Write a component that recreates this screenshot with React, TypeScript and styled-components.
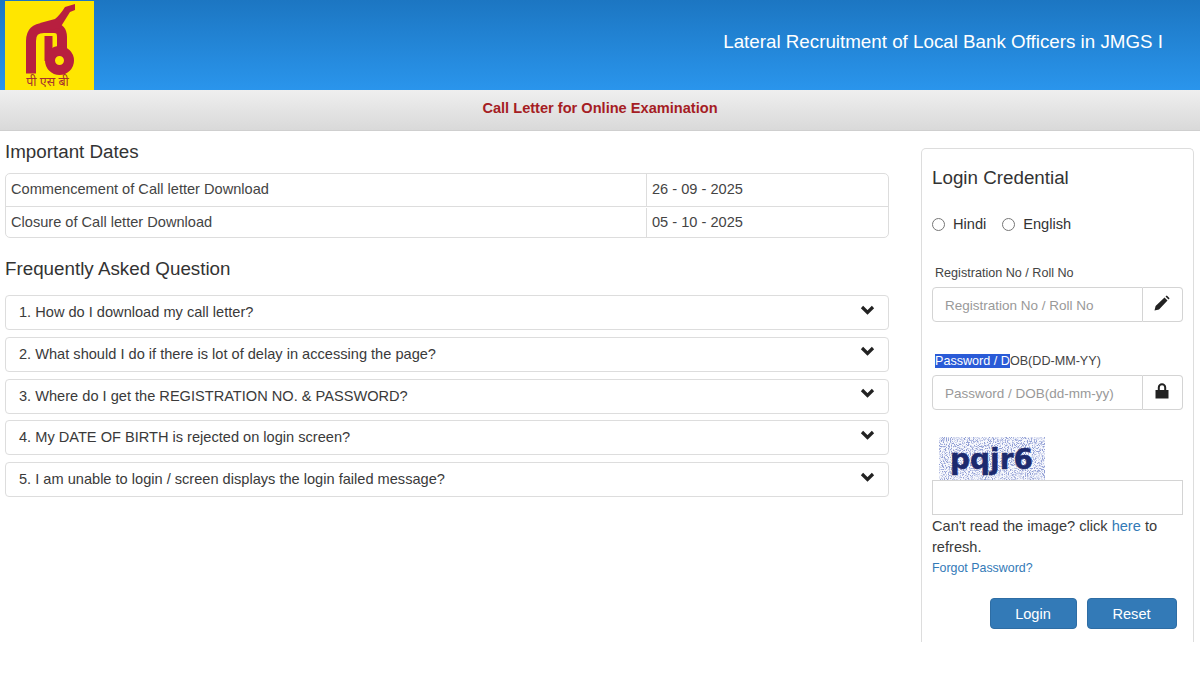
import React from 'react';
import styled, { createGlobalStyle } from 'styled-components';

const GlobalStyle = createGlobalStyle`
  html, body {
    margin: 0;
    padding: 0;
    background: #fff;
  }
  body {
    font-family: "Liberation Sans", Arial, sans-serif;
    color: #333;
    overflow: hidden;
  }
  * {
    box-sizing: border-box;
  }
`;

const Page = styled.div`
  width: 1200px;
  height: 700px;
  display: flex;
  flex-direction: column;
`;

const Header = styled.header`
  height: 90px;
  flex: none;
  display: flex;
  justify-content: space-between;
  align-items: center;
  padding: 1px 37px 0 5px;
  background: linear-gradient(to bottom, #1c76c2 0%, #2a95ec 100%);
`;

const LogoBox = styled.div`
  width: 89px;
  height: 89px;
  background: #ffe600;
  display: flex;
  flex-direction: column;
  align-items: center;
`;

const LogoText = styled.span`
  font-family: "Noto Sans", "Liberation Sans", sans-serif;
  font-size: 12.5px;
  line-height: 12px;
  padding-right: 4px;
  white-space: nowrap;
  color: #a5302f;
`;

const HeaderTitle = styled.div`
  color: #fff;
  font-size: 18.78px;
  margin-top: -8px;
`;

const SubHeader = styled.div`
  height: 41px;
  flex: none;
  display: flex;
  align-items: center;
  justify-content: center;
  padding-bottom: 4px;
  background: linear-gradient(to bottom, #efefef 0%, #d9d9d9 100%);
  border-bottom: 1px solid #cfcfcf;
  color: #a51d24;
  font-size: 14.6px;
  font-weight: bold;
`;

const Body = styled.main`
  flex: 1;
  display: flex;
  justify-content: space-between;
  align-items: flex-start;
  padding: 0 6px 0 5px;
`;

const LeftColumn = styled.section`
  width: 884px;
  padding-top: 10px;
`;

const Heading = styled.h2`
  margin: 0 0 10px;
  font-size: 18.8px;
  font-weight: normal;
  line-height: 22px;
`;

const DatesTable = styled.div`
  border: 1px solid #ddd;
  border-radius: 5px;
  margin-bottom: 20px;
`;

const DateRow = styled.div`
  display: grid;
  grid-template-columns: 640px 1fr;
  height: 31.5px;
  & + & {
    border-top: 1px solid #ddd;
    padding-top: 1px;
  }
`;

const DateCell = styled.div`
  display: flex;
  align-items: center;
  padding: 0 5px 1px;
  font-size: 14.6px;
  color: #444;
  & + & {
    border-left: 1px solid #ddd;
  }
`;

const FaqList = styled.div`
  display: flex;
  flex-direction: column;
  gap: 6.8px;
  margin-top: 15px;
`;

const FaqItem = styled.div`
  height: 35px;
  border: 1px solid #ddd;
  border-radius: 4px;
  display: flex;
  align-items: center;
  justify-content: space-between;
  padding: 0 13px 1px;
  font-size: 14.6px;
  color: #3a3a3a;
  & > svg {
    margin-bottom: 5px;
  }
`;

const LoginPanel = styled.aside`
  width: 273px;
  height: 494px;
  margin-top: 17px;
  border: 1px solid #ddd;
  border-bottom: none;
  border-radius: 5px 5px 0 0;
  padding: 0 10px;
`;

const PanelTitle = styled.h3`
  margin: 18px 0 0;
  font-size: 18.8px;
  font-weight: normal;
  line-height: 22px;
`;

const RadioRow = styled.div`
  display: flex;
  align-items: center;
  gap: 16px;
  margin-top: 25px;
  height: 20px;
`;

const RadioLabel = styled.label`
  display: flex;
  align-items: center;
  gap: 8px;
  font-size: 14.6px;
`;

const RadioInput = styled.input.attrs({ type: 'radio', name: 'lang' })`
  width: 13px;
  height: 13px;
  margin: 0;
`;

const FieldLabel = styled.div<{ $top: number }>`
  font-size: 12.6px;
  line-height: 14px;
  padding-left: 3px;
  color: #444;
  margin-top: ${(p) => p.$top}px;
`;

const Selected = styled.span`
  background: #2a5bd7;
  color: #fff;
`;

const InputGroup = styled.div`
  display: flex;
  height: 35px;
  margin-top: 7px;
  width: 251px;
`;

const TextInput = styled.input`
  width: 211px;
  height: 100%;
  border: 1px solid #d4d4d4;
  border-radius: 4px 0 0 4px;
  padding: 1px 12px 0;
  font-family: inherit;
  font-size: 13.5px;
  color: #555;
  outline: none;
  &::placeholder {
    color: #999;
    opacity: 1;
  }
`;

const InputAddon = styled.span`
  flex: 1;
  display: flex;
  align-items: center;
  justify-content: center;
  padding: 0 2px 3px 0;
  border: 1px solid #d4d4d4;
  border-left: none;
  border-radius: 0 4px 4px 0;
  color: #222;
`;

const CaptchaBox = styled.div`
  width: 106px;
  height: 43px;
  margin: 27px 0 0 7px;
`;

const CaptchaInput = styled.input`
  display: block;
  width: 251px;
  height: 35px;
  border: 1px solid #d4d4d4;
  outline: none;
`;

const HelpText = styled.p`
  margin: 0;
  padding-top: 1px;
  font-size: 14.6px;
  line-height: 21px;
  color: #3a3a3a;
`;

const Link = styled.a`
  color: #337ab7;
  text-decoration: none;
`;

const ForgotLink = styled(Link)`
  display: block;
  font-size: 12.4px;
  line-height: 16px;
  margin-top: 2px;
`;

const ButtonRow = styled.div`
  display: flex;
  justify-content: flex-end;
  gap: 10px;
  margin-top: 22px;
  padding-right: 6.5px;
`;

const ActionButton = styled.button<{ $width: number }>`
  width: ${(p) => p.$width}px;
  height: 31px;
  border: 1px solid #2e6da4;
  border-radius: 4px;
  background: #337ab7;
  color: #fff;
  font-family: inherit;
  font-size: 14.6px;
`;

const faqs = [
  '1. How do I download my call letter?',
  '2. What should I do if there is lot of delay in accessing the page?',
  '3. Where do I get the REGISTRATION NO. & PASSWORD?',
  '4. My DATE OF BIRTH is rejected on login screen?',
  '5. I am unable to login / screen displays the login failed message?',
];

const Chevron = () => (
  <svg width="15" height="12" viewBox="0 0 15 12">
    <path d="M2 3 L7.5 8.5 L13 3" fill="none" stroke="#222" strokeWidth="3.2" />
  </svg>
);

const Pencil = () => (
  <svg width="16" height="16" viewBox="0 0 16 16">
    <path d="M0.5 15.5 L1.6 11 L10.5 2.5 L13.5 5.5 L5 14.4 Z M11.5 1.5 L12.8 0.4 L15.6 3.2 L14.5 4.5 Z" fill="#222" />
  </svg>
);

const Lock = () => (
  <svg width="14" height="16" viewBox="0 0 14 16">
    <path d="M0.5 7 H13.5 V15.5 H0.5 Z" fill="#222" />
    <path d="M3.8 7 V4.5 A3.2 3.2 0 0 1 10.2 4.5 V7" fill="none" stroke="#222" strokeWidth="2" />
  </svg>
);

const Logo = () => (
  <svg width="89" height="75" viewBox="0 0 89 75" style={{ flex: 'none' }}>
    <g fill="none" stroke="#b81f3f">
      <path d="M26 72.5 V40 Q26 27 39 27 H49 Q57 27 57 36 V48" strokeWidth="10" />
      <path d="M43.5 35 V60" strokeWidth="8" />
      <circle cx="54.5" cy="59.5" r="9.5" strokeWidth="10" />
    </g>
    <path d="M35 22 L50 18 Q55 14 60 6 L70 3 L70 9 L65 11 L55 27 L40 30 Z" fill="#b81f3f" />
  </svg>
);

const Captcha = () => (
  <svg width="106" height="43" viewBox="0 0 106 43">
    <filter id="speckle">
      <feTurbulence type="fractalNoise" baseFrequency="0.95" numOctaves="2" seed="4" />
      <feColorMatrix values="0 0 0 0 0.28  0 0 0 0 0.34  0 0 0 0 0.66  0 0 0 4.5 -2.05" />
    </filter>
    <rect width="106" height="43" fill="#f8f9fd" />
    <rect width="106" height="43" filter="url(#speckle)" />
    <text
      x="11"
      y="32"
      fontFamily="'DejaVu Sans', sans-serif"
      fontWeight="bold"
      fontSize="28"
      fill="#1c2a6e"
      stroke="#1c2a6e"
      strokeWidth="0.5"
    >
      pqjr6
    </text>
  </svg>
);

export default function App() {
  return (
    <Page>
      <GlobalStyle />
      <Header>
        <LogoBox>
          <Logo />
          <LogoText>पी एस बी</LogoText>
        </LogoBox>
        <HeaderTitle>Lateral Recruitment of Local Bank Officers in JMGS I</HeaderTitle>
      </Header>
      <SubHeader>Call Letter for Online Examination</SubHeader>
      <Body>
        <LeftColumn>
          <Heading>Important Dates</Heading>
          <DatesTable>
            <DateRow>
              <DateCell>Commencement of Call letter Download</DateCell>
              <DateCell>26 - 09 - 2025</DateCell>
            </DateRow>
            <DateRow>
              <DateCell>Closure of Call letter Download</DateCell>
              <DateCell>05 - 10 - 2025</DateCell>
            </DateRow>
          </DatesTable>
          <Heading>Frequently Asked Question</Heading>
          <FaqList>
            {faqs.map((q) => (
              <FaqItem key={q}>
                {q}
                <Chevron />
              </FaqItem>
            ))}
          </FaqList>
        </LeftColumn>
        <LoginPanel>
          <PanelTitle>Login Credential</PanelTitle>
          <RadioRow>
            <RadioLabel>
              <RadioInput />
              Hindi
            </RadioLabel>
            <RadioLabel>
              <RadioInput />
              English
            </RadioLabel>
          </RadioRow>
          <FieldLabel $top={32}>Registration No / Roll No</FieldLabel>
          <InputGroup>
            <TextInput placeholder="Registration No / Roll No" />
            <InputAddon>
              <Pencil />
            </InputAddon>
          </InputGroup>
          <FieldLabel $top={32}>
            <Selected>Password / D</Selected>OB(DD-MM-YY)
          </FieldLabel>
          <InputGroup>
            <TextInput placeholder="Password / DOB(dd-mm-yy)" />
            <InputAddon>
              <Lock />
            </InputAddon>
          </InputGroup>
          <CaptchaBox>
            <Captcha />
          </CaptchaBox>
          <CaptchaInput />
          <HelpText>
            Can't read the image? click <Link href="#">here</Link> to refresh.
          </HelpText>
          <ForgotLink href="#">Forgot Password?</ForgotLink>
          <ButtonRow>
            <ActionButton $width={87}>Login</ActionButton>
            <ActionButton $width={90}>Reset</ActionButton>
          </ButtonRow>
        </LoginPanel>
      </Body>
    </Page>
  );
}
